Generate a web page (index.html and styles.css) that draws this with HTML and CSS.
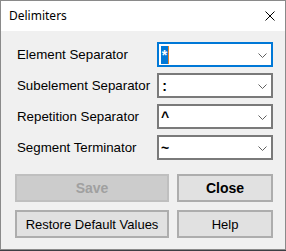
FILE: index.html
```html
<!DOCTYPE html>
<html lang="en">
<head>
<meta charset="UTF-8">
<title>Delimiters</title>
<link rel="stylesheet" href="styles.css">
</head>
<body>
<div class="window">
  <div class="titlebar">
    <span class="title">Delimiters</span>
    <svg class="close-x" width="10" height="10" viewBox="0 0 10 10">
      <path d="M0.5 0.5 L9.5 9.5 M9.5 0.5 L0.5 9.5" stroke="#000" stroke-width="1" fill="none"/>
    </svg>
  </div>
  <div class="content">
    <div class="fields">
      <label>Element Separator</label>
      <div class="combo focused"><span class="value sel">*</span><span class="caret"></span><svg class="chev" width="9" height="5" viewBox="0 0 9 5"><path d="M0.5 0.5 L4.5 4.5 L8.5 0.5" stroke="#606060" fill="none"/></svg></div>
      <label>Subelement Separator</label>
      <div class="combo"><span class="value">:</span><svg class="chev" width="9" height="5" viewBox="0 0 9 5"><path d="M0.5 0.5 L4.5 4.5 L8.5 0.5" stroke="#606060" fill="none"/></svg></div>
      <label>Repetition Separator</label>
      <div class="combo"><span class="value">^</span><svg class="chev" width="9" height="5" viewBox="0 0 9 5"><path d="M0.5 0.5 L4.5 4.5 L8.5 0.5" stroke="#606060" fill="none"/></svg></div>
      <label>Segment Terminator</label>
      <div class="combo"><span class="value">~</span><svg class="chev" width="9" height="5" viewBox="0 0 9 5"><path d="M0.5 0.5 L4.5 4.5 L8.5 0.5" stroke="#606060" fill="none"/></svg></div>
    </div>
    <div class="buttons">
      <button class="btn bold" disabled>Save</button>
      <button class="btn bold">Close</button>
      <button class="btn">Restore Default Values</button>
      <button class="btn">Help</button>
    </div>
  </div>
</div>
</body>
</html>
```

FILE: styles.css
```css
html {
    background: #3c3f44;
}

body {
    margin: 0;
    width: 286px;
    height: 251px;
    font-family: 'Liberation Sans', Arial, sans-serif;
    font-size: 13px;
    color: #000;
}

.window {
    width: 284px;
    height: 248px;
    border: 1px solid #8a8a8a;
    background: #f0f0f0;
    display: flex;
    flex-direction: column;
}

.titlebar {
    height: 30px;
    background: #fff;
    display: flex;
    align-items: center;
    justify-content: space-between;
    padding: 0 9px 0 8px;
}

.title {
    font-family: 'Noto Sans', sans-serif;
    font-size: 12px;
    margin-top: -1px;
}

.close-x {
    margin-right: 1px;
    margin-top: -1px;
}

.content {
    padding: 11px 0 0 13px;
}

.fields {
    display: grid;
    grid-template-columns: 140px 116px;
    grid-auto-rows: 25px;
    row-gap: 6px;
    padding-left: 3px;
}

.fields label {
    align-self: center;
    white-space: nowrap;
    font-size: 13.3px;
}

.combo {
    position: relative;
    background: #fff;
    border: 2px solid #7a7a7a;
    display: flex;
    align-items: center;
    padding-left: 2px;
}

.combo.focused {
    border-color: #0078d7;
}

.value {
    display: inline-block;
    width: 7px;
    line-height: 18px;
    font-size: 14px;
    font-weight: bold;
    text-align: center;
}

.value.sel {
    background: #0078d7;
    color: #fff;
}

.caret {
    width: 1px;
    height: 18px;
    background: #e0822a;
}

.chev {
    position: absolute;
    right: 4px;
    top: 9px;
}

.buttons {
    display: grid;
    grid-template-columns: 154px 96px;
    grid-auto-rows: 28px;
    gap: 8px;
    margin-top: 14px;
    margin-left: 1px;
}

.btn {
    font-family: 'Liberation Sans', Arial, sans-serif;
    font-size: 13px;
    background: #e1e1e1;
    border: 2px solid #adadad;
    color: #000;
    padding: 0;
}

.btn.bold {
    font-weight: bold;
    font-size: 14px;
}

.btn:disabled {
    background: #cccccc;
    border-color: #bfbfbf;
    color: #a0a0a0;
}
```
